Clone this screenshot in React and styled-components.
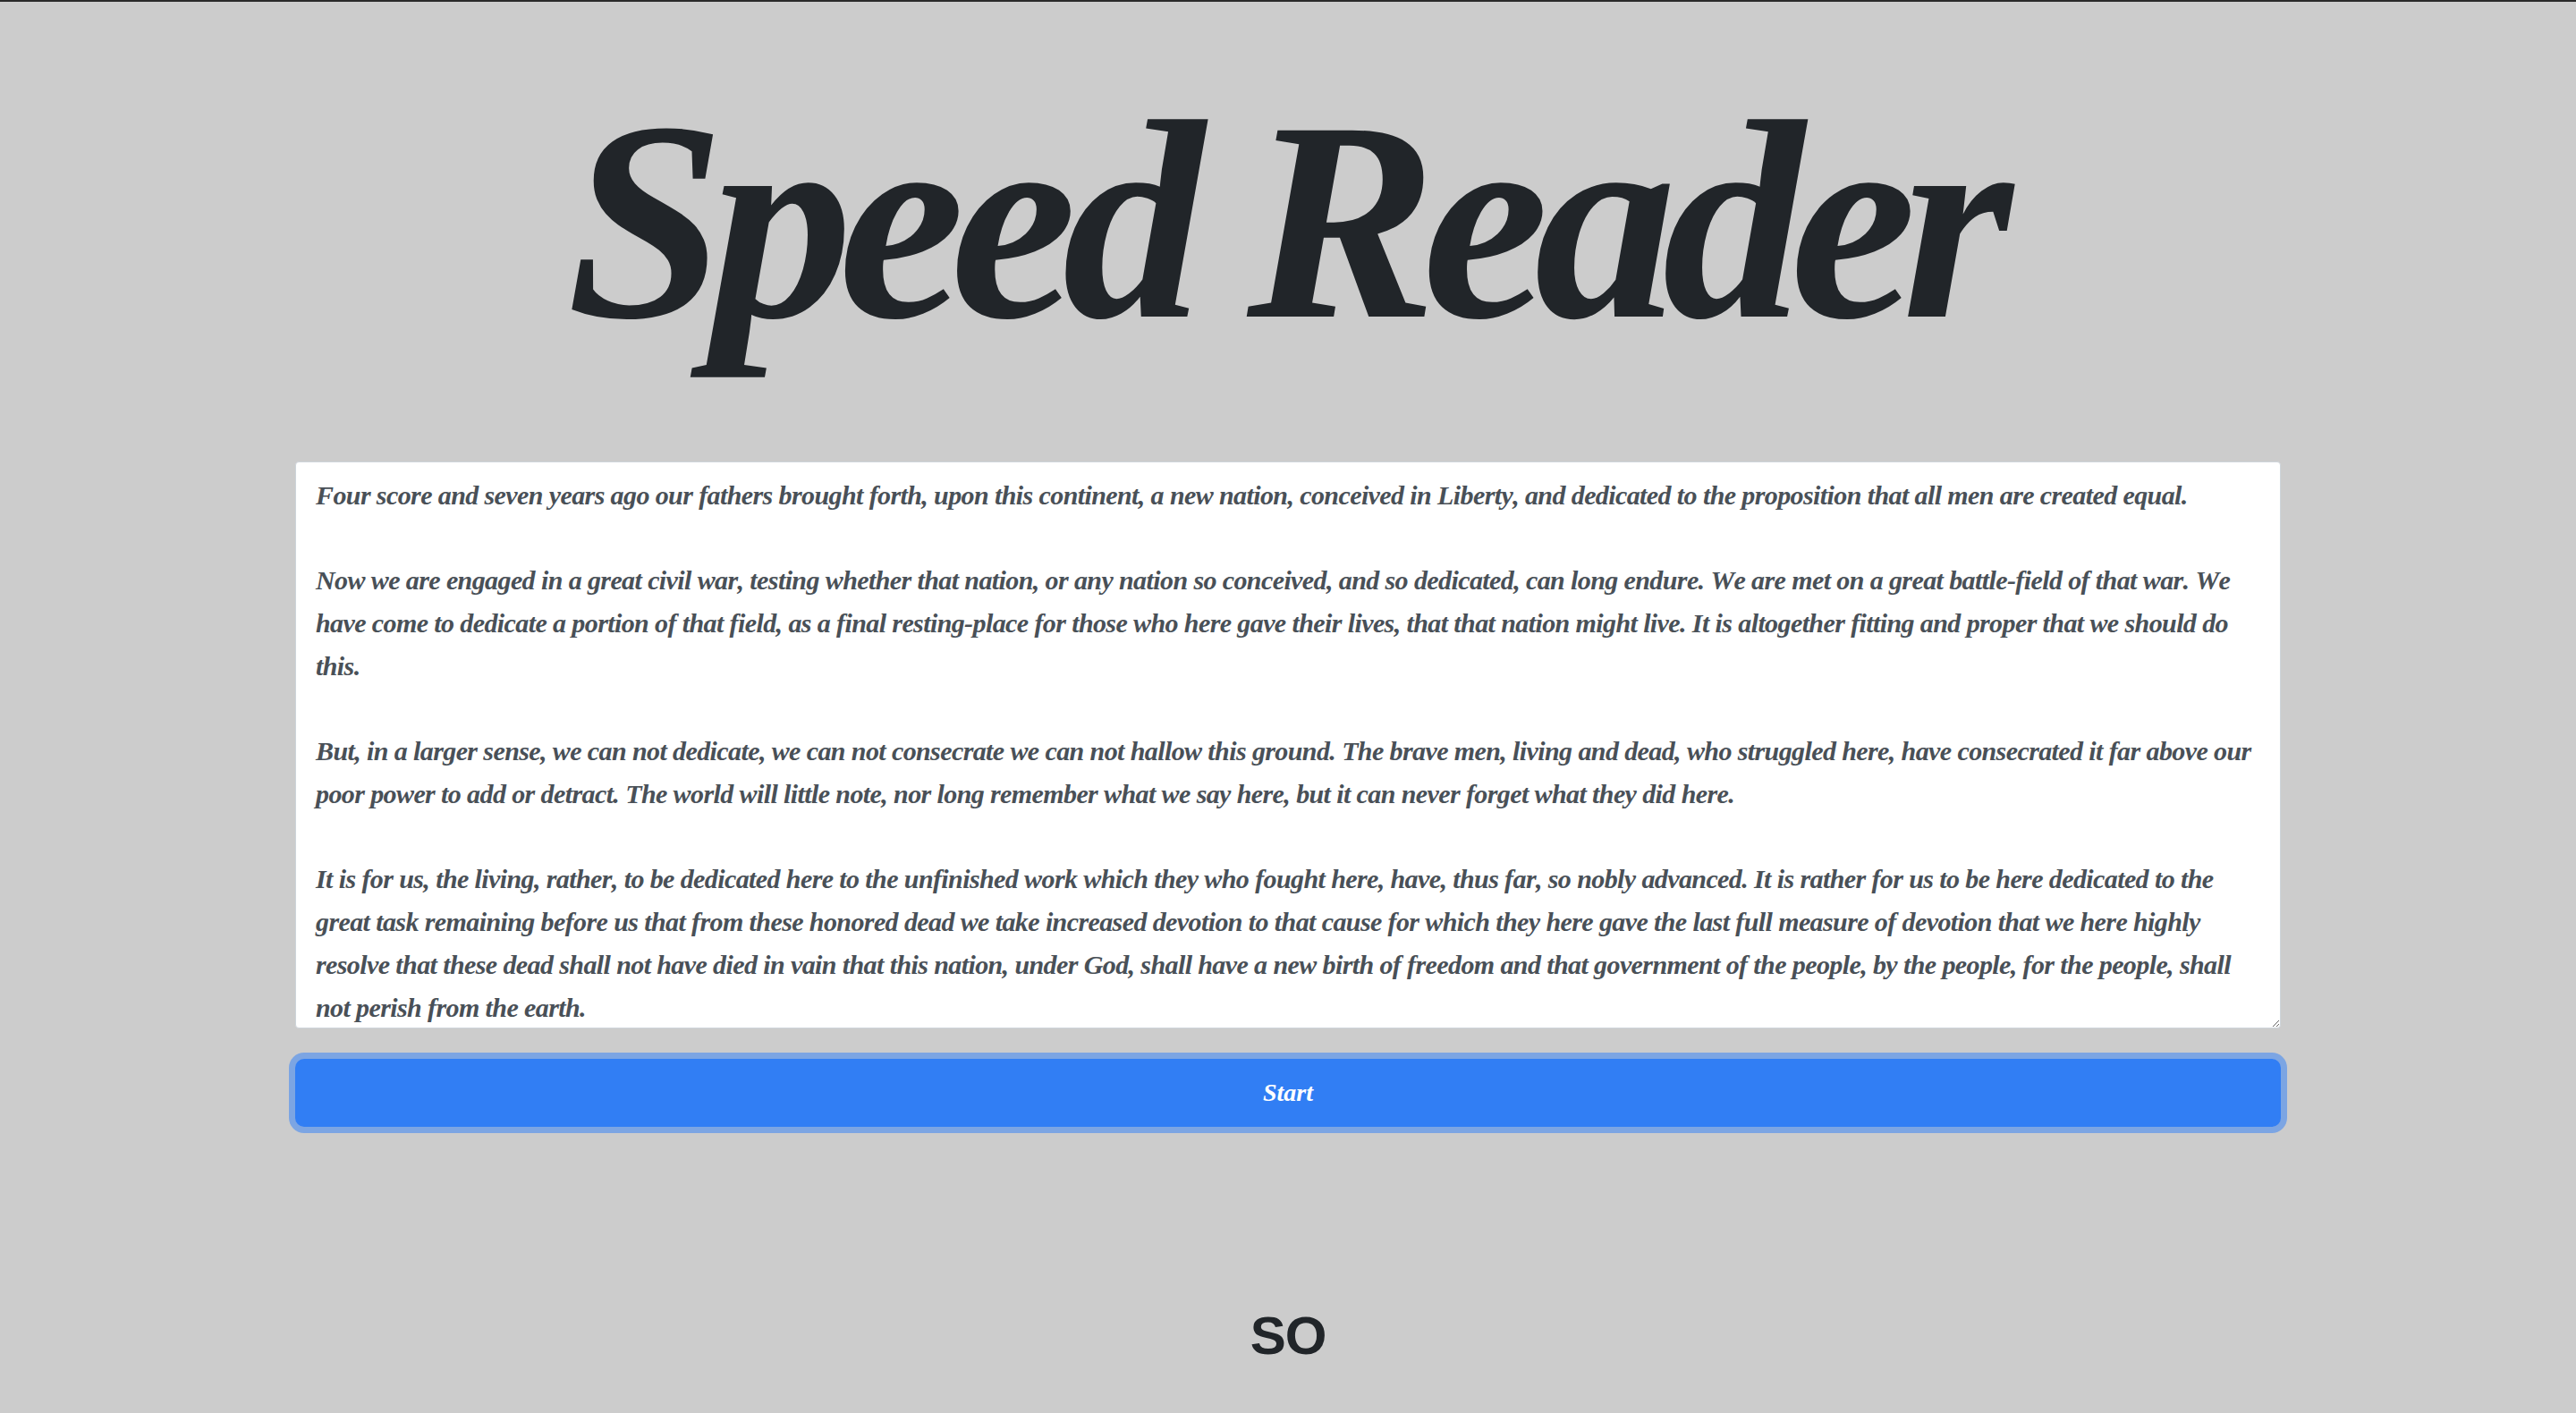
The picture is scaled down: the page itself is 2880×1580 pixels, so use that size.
import styled, { createGlobalStyle } from "styled-components";

const GlobalStyle = createGlobalStyle`
	html, body {
		margin: 0;
		padding: 0;
		background: #cccccc;
	}
	* {
		box-sizing: border-box;
	}
`;

const speech = `Four score and seven years ago our fathers brought forth, upon this continent, a new nation, conceived in Liberty, and dedicated to the proposition that all men are created equal.

Now we are engaged in a great civil war, testing whether that nation, or any nation so conceived, and so dedicated, can long endure. We are met on a great battle-field of that war. We have come to dedicate a portion of that field, as a final resting-place for those who here gave their lives, that that nation might live. It is altogether fitting and proper that we should do this.

But, in a larger sense, we can not dedicate, we can not consecrate we can not hallow this ground. The brave men, living and dead, who struggled here, have consecrated it far above our poor power to add or detract. The world will little note, nor long remember what we say here, but it can never forget what they did here.

It is for us, the living, rather, to be dedicated here to the unfinished work which they who fought here, have, thus far, so nobly advanced. It is rather for us to be here dedicated to the great task remaining before us that from these honored dead we take increased devotion to that cause for which they here gave the last full measure of devotion that we here highly resolve that these dead shall not have died in vain that this nation, under God, shall have a new birth of freedom and that government of the people, by the people, for the people, shall not perish from the earth.`;

const App = () => {
	return (
		<>
			<GlobalStyle />
			<PageStyled>
				<div className="top-bar" />
				<main className="reader">
					<h1 className="title">Speed Reader</h1>
					<textarea className="text-input" defaultValue={speech} spellCheck={false} />
					<button className="start-btn" type="button">
						Start
					</button>
					<div className="current-word">SO</div>
				</main>
			</PageStyled>
		</>
	);
};

const PageStyled = styled.div`
	min-height: 1580px;
	background: #cccccc;

	.top-bar {
		height: 2px;
		background: #2a2a2a;
	}

	.reader {
		width: 2220px;
		margin: 0 auto;
		display: flex;
		flex-direction: column;
		align-items: stretch;
	}

	.title {
		margin: 55px 0 0;
		padding-right: 12px;
		text-align: center;
		font-family: "Liberation Serif", serif;
		font-style: italic;
		font-weight: 700;
		font-size: 318px;
		line-height: 1.2;
		letter-spacing: -16px;
		color: #212529;
	}

	.text-input {
		margin-top: 77px;
		height: 634px;
		padding: 13px 22px 0;
		background: #ffffff;
		border: 1px solid #ced4da;
		border-radius: 4px;
		font-family: "Liberation Serif", serif;
		font-style: italic;
		font-weight: 700;
		font-size: 30px;
		line-height: 47.75px;
		letter-spacing: -0.6px;
		font-kerning: none;
		color: #495057;
		overflow: hidden;
		resize: vertical;
		outline: none;
	}

	.start-btn {
		margin-top: 34px;
		height: 76px;
		border: none;
		border-radius: 10px;
		background: #317ef4;
		box-shadow: 0 0 0 7px #7ca5e3;
		font-family: "Liberation Serif", serif;
		font-style: italic;
		font-weight: 700;
		font-size: 28px;
		color: #ffffff;
		cursor: pointer;
	}

	.current-word {
		margin-top: 198px;
		text-align: center;
		font-family: "Liberation Sans", Arial, sans-serif;
		font-weight: 700;
		font-size: 60px;
		line-height: 1.2;
		letter-spacing: -1px;
		color: #212529;
	}
`;

export default App;
